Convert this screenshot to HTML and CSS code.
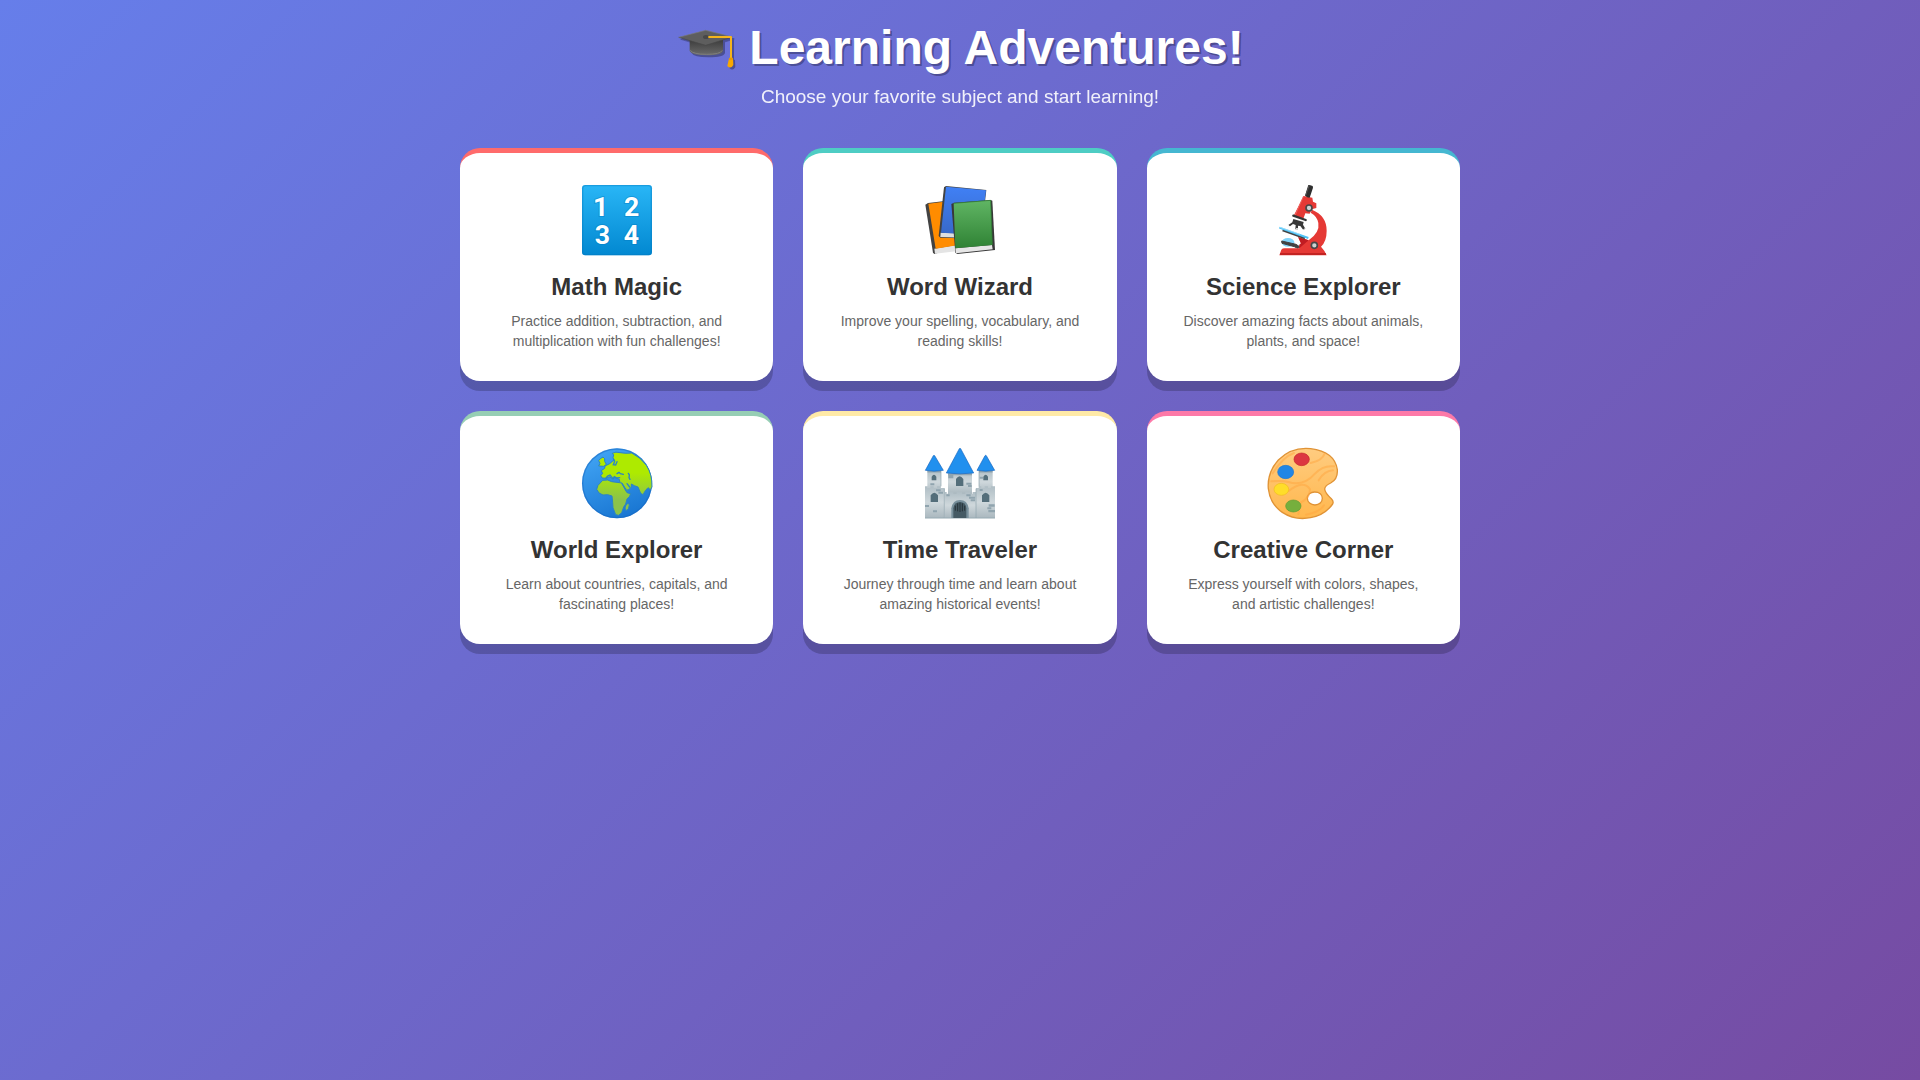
FILE: index.html
```
<!DOCTYPE html>
<html lang="en">
<head>
  <meta charset="UTF-8">
  <meta name="viewport" content="width=device-width, initial-scale=1.0">
  <title>Learning Adventures</title>
  <link rel="stylesheet" href="styles.css">
</head>
<body>
  <div class="container">
    <header class="header">
      <h1>
        <svg class="cap" viewBox="6 0 180 150" aria-hidden="true">
          <defs>
            <linearGradient id="capBase" x1="0" y1="0" x2="0" y2="1">
              <stop offset="0" stop-color="#3c3c3c"/>
              <stop offset="1" stop-color="#6b6b6b"/>
            </linearGradient>
          </defs>
          <path d="M47 50v34q6 13 51 13t49-13V50z" fill="url(#capBase)"/>
          <path d="M49 82q8 12 49 12t47-12" fill="none" stroke="#7d7d7d" stroke-width="3"/>
          <path d="M14 43L95 22l80 20-80 25z" fill="#5e5e5e"/>
          <path d="M14 43l81 24 80-25" fill="none" stroke="#484848" stroke-width="2"/>
          <path d="M14 43L95 22l80 20" fill="none" stroke="#787878" stroke-width="2"/>
          <ellipse cx="96" cy="42" rx="9" ry="6" fill="#484848"/>
          <path d="M103 42h68v66" fill="none" stroke="#f5b51b" stroke-width="6" stroke-linejoin="round"/>
          <path d="M165 106q6-6 12 0l1 20q-8 14-18 3z" fill="#f9a800"/>
          <path d="M165 108h12" stroke="#c98400" stroke-width="2"/>
        </svg>
        <span>Learning Adventures!</span>
      </h1>
      <p>Choose your favorite subject and start learning!</p>
    </header>

    <main class="subjects">
      <a href="#math" class="card math">
        <svg class="icon" viewBox="15 9 216 225" aria-hidden="true">
          <defs>
            <linearGradient id="tile" x1="0" y1="0" x2="0" y2="1">
              <stop offset="0" stop-color="#29b6f6"/>
              <stop offset="1" stop-color="#0288d1"/>
            </linearGradient>
          </defs>
          <rect x="18" y="15" width="210" height="211" rx="10" fill="url(#tile)"/>
          <rect x="20" y="17" width="206" height="207" rx="9" fill="none" stroke="#0277bd" stroke-opacity="0.4" stroke-width="4"/>
          <g class="digits">
            <text x="74" y="108">1</text>
            <text x="167" y="108">2</text>
            <text x="79" y="191">3</text>
            <text x="166" y="191">4</text>
          </g>
        </svg>
        <h3>Math Magic</h3>
        <p>Practice addition, subtraction, and multiplication with fun challenges!</p>
      </a>
      <a href="#words" class="card words">
        <svg class="icon" viewBox="15 9 216 225" aria-hidden="true">
          <defs>
            <linearGradient id="bookBlue" x1="0" y1="0" x2="0" y2="1">
              <stop offset="0" stop-color="#4080f5"/>
              <stop offset="1" stop-color="#3868c8"/>
            </linearGradient>
            <linearGradient id="bookGreen" x1="0" y1="0" x2="0" y2="1">
              <stop offset="0" stop-color="#60b564"/>
              <stop offset="1" stop-color="#2f8234"/>
            </linearGradient>
          </defs>
          <path d="M19 74l8-5 70-8 18 140-69 21-4-4z" fill="#424242"/>
          <path d="M46 206l66-11v19l-64 7z" fill="#e4e4e4"/>
          <path d="M28 71l70-9 16 134-64 10z" fill="#ff8c00"/>
          <path d="M75 22l6-4 121 12-17 146-121-3-5-5z" fill="#424242"/>
          <path d="M65 158l119 4v13l-120-4z" fill="#dedede"/>
          <path d="M81 20l120 11-16 134-119-7z" fill="url(#bookBlue)"/>
          <path d="M97 72l8-4 110-8 5 2 8 148-113 12-6-4z" fill="#383838"/>
          <path d="M109 205l110-10 2 13-110 12z" fill="#e6e6e6"/>
          <path d="M104 70l111-9 5 134-111 10z" fill="url(#bookGreen)"/>
          <path d="M105 70l110-9 5 133" fill="none" stroke="#2e7d32" stroke-width="2"/>
        </svg>
        <h3>Word Wizard</h3>
        <p>Improve your spelling, vocabulary, and reading skills!</p>
      </a>
      <a href="#science" class="card science">
        <svg class="icon" viewBox="15 9 216 225" aria-hidden="true">
          <ellipse cx="78" cy="187" rx="19" ry="13" fill="#81d4fa"/>
          <path d="M59 183l43 10 12 8-7 4-10-5-37-10z" fill="#424242" stroke="#424242" stroke-width="3" stroke-linejoin="round"/>
          <path d="M52 226l6-17q3-4 10-4h44l6-12-10-22 32 10q34-24 29-52-3-20-23-31l4-9q44 18 44 63 0 32-17 48 10 10 17 26z" fill="#e53935"/>
          <path d="M54 222h138" stroke="#b71c1c" stroke-width="4"/>
          <path d="M112 205q-3-12 5-15l-8-18 31 9z" fill="#c01c22"/>
          <path d="M125 48l26 5 2 12 10 5v14l-14 4-6 13-13-1-6 16-29-9z" fill="#e53935"/>
          <path d="M125 48l-26 58" stroke="#f06460" stroke-width="3"/>
          <path d="M139 15q3-1 13 3l1 5-10 30q-8 0-14-6z" fill="#2e2e2e"/>
          <path d="M141 18l-10 28" stroke="#555" stroke-width="3"/>
          <path d="M94 107l37 13" stroke="#353535" stroke-width="7" stroke-linecap="round"/>
          <path d="M94 117l31 9-2 8 7 12-6 4-9-12-7-1v11h-8l1-13-8-3-9 7-5-4 12-8z" fill="#383838"/>
          <path d="M77 135l5 4M102 146h7M124 149l5-3" stroke="#eee" stroke-width="3"/>
          <path d="M62 150l67 24" stroke="#424242" stroke-width="8"/>
          <path d="M52 143l87 31" stroke="#4fc3f7" stroke-width="6"/>
          <path d="M54 142l60 21" stroke="#b3e5fc" stroke-width="2"/>
          <g fill="#cfd2d3" stroke="#484848" stroke-width="5">
            <circle cx="141" cy="84" r="9"/>
            <circle cx="157" cy="196" r="9"/>
          </g>
        </svg>
        <h3>Science Explorer</h3>
        <p>Discover amazing facts about animals, plants, and space!</p>
      </a>
      <a href="#world" class="card world">
        <svg class="icon" viewBox="15 9 216 225" aria-hidden="true">
          <defs>
            <linearGradient id="sea" x1="0.2" y1="0" x2="0.6" y2="1">
              <stop offset="0" stop-color="#42a5f5"/>
              <stop offset="1" stop-color="#1976d2"/>
            </linearGradient>
            <linearGradient id="land" gradientUnits="userSpaceOnUse" x1="0" y1="70" x2="0" y2="170">
              <stop offset="0.2" stop-color="#aeea00"/>
              <stop offset="1" stop-color="#8bc34a"/>
            </linearGradient>
          </defs>
          <circle cx="123" cy="121" r="105" fill="url(#sea)"/>
          <circle cx="123" cy="121" r="103" fill="none" stroke="#1565c0" stroke-opacity="0.5" stroke-width="4"/>
          <g fill="url(#land)" stroke="#2b83c5" stroke-width="3" stroke-linejoin="round">
            <path d="M109 31q10-6 23-2 18 3 35 1 27 13 44 37 18 27 17 65l-5 8-7-6-8 9-7 12-7-4-8-19-11-4-9-5 0 9q-7 11-17 10l-10-15-7-8-2-10-13-5-8 3-9-6-8 5-14-1-4-8 6-5-4-9 10-7 1-7 14-7 13-11-3-7 2-8z"/>
            <path d="M73 47l8-5 5 5v8l5 9-8 6-15-1 4-8-4-8z"/>
            <path d="M66 127l14-15 15-1 12 5 7 1 9 1 15 2 10 21 5 8 11 3q-1 8-11 16l-4 15-6 9-6 17-9 8-9-2-8-21-1-15-2-20-13-4-14 1-12-6-7-11z"/>
            <path d="M150 186l7-6 3 6-3 12-7 5-3-8z"/>
          </g>
          <g fill="none" stroke="#2b83c5" stroke-width="4" stroke-linecap="round">
            <path d="M90 105l5-6 7-3 9 11 4-6 8 4 8-1"/>
            <path d="M123 92l6-4 4 4 9 2M157 91l3 5-1 8 3 5"/>
            <path d="M113 49l3 6-4 10 7 1 4-10"/>
            <path d="M138 122l8 12 4 5M153 122l8 10"/>
          </g>
        </svg>
        <h3>World Explorer</h3>
        <p>Learn about countries, capitals, and fascinating places!</p>
      </a>
      <a href="#history" class="card history">
        <svg class="icon" viewBox="15 9 216 225" aria-hidden="true">
          <defs>
            <linearGradient id="stone" x1="0" y1="0" x2="0" y2="1">
              <stop offset="0" stop-color="#b0bec5"/>
              <stop offset="0.5" stop-color="#cfd8dc"/>
              <stop offset="1" stop-color="#a9b7be"/>
            </linearGradient>
          </defs>
          <g fill="url(#stone)">
            <path d="M25 80h41v55H25zM180 80h41v55h-41zM87 88h72v65H87z"/>
            <path d="M77 147h6v5h8v-5h12v5h10v-5h16v5h10v-5h14v5h8v-5h10v79H77z"/>
            <path d="M18 130h8v5h8v-5h10v5h10v-5h9v5h14v91H18zM171 135h8v-5h8v5h10v-5h10v5h9v-5h12v96h-57z"/>
          </g>
          <path d="M18 225h210M76 137v88M171 137v88M66 84v46M180 84v46" stroke="#90a4ae" stroke-width="2"/>
          <path d="M25 86h41M180 86h41M87 94h72" stroke="#78909c" stroke-opacity="0.6" stroke-width="5"/>
          <g fill="#90a4ae">
            <path d="M51 139h14v6H51zM58 146h14v6H58zM18 186h12v6H18zM42 202h12v6H42zM88 95h15v11H88zM142 119h15v6h-15zM147 126h11v6h-11zM142 154h13v6h-13zM150 161h18v6h-18zM155 169h13v6h-13zM82 154h10v6H82zM182 101h10v6h-10zM209 184h18v7h-18zM205 193h12v6h-12zM182 138h9v6h-9zM208 201h20v7h-20zM34 121h12v6H34z"/>
          </g>
          <g fill="#546e7a">
            <path d="M38 112v-11q7-12 14 0v11zM193 112v-11q7-12 14 0v11zM111 129v-21q11-16 22 0v21z"/>
            <path d="M35 177v-20q11-15 22 0v20zM189 177v-20q11-15 22 0v20z"/>
          </g>
          <path d="M97 225v-29q4-25 26-25t26 25v29z" fill="#78909c"/>
          <path d="M103 225v-29q3-19 20-19t19 19v29z" fill="#455a64"/>
          <path d="M109 188v15M116 181v24M123 179v28M130 181v24M137 188v15" stroke="#263238" stroke-width="3"/>
          <g fill="#2190ee" stroke="#1565c0" stroke-width="2" stroke-linejoin="round">
            <path d="M43 38q2-2 4 0l26 44q-28 5-54 0zM198 38q2-2 4 0l25 44q-27 5-53 0zM121 17q2-3 4 0l39 73q-41 5-82 0z"/>
          </g>
        </svg>
        <h3>Time Traveler</h3>
        <p>Journey through time and learn about amazing historical events!</p>
      </a>
      <a href="#art" class="card art">
        <svg class="icon" viewBox="15 9 216 225" aria-hidden="true">
          <defs>
            <linearGradient id="wood" x1="0" y1="0" x2="0" y2="1">
              <stop offset="0" stop-color="#ffcc80"/>
              <stop offset="1" stop-color="#ffb74d"/>
            </linearGradient>
          </defs>
          <path d="M146 17q-57-6-97 34-34 38-30 86 5 46 42 71 38 25 85 16 43-8 66-41 4-8-4-16-19-17-20-29 1-10 18-18 22-12 20-40-8-54-80-63zM158 147c14 0 23 8 23 19s-9 20-22 20-23-9-23-20 9-19 22-19z" fill="url(#wood)" fill-rule="evenodd" stroke="#e09336" stroke-width="4"/>
          <g fill="none" stroke="#ffa63f" stroke-opacity="0.5" stroke-width="6" stroke-linecap="round">
            <path d="M28 115q36-2 51 2 46 14 80-25 24-26 57-22"/>
            <path d="M80 144q45-35 64-5 0 26-27 39l-8 35"/>
            <path d="M132 215q42-8 54-28M146 60q35-7 42-28M32 91q32-50 64-61"/>
            <path d="M170 112q16-28 43-30"/>
          </g>
          <g stroke-width="2">
            <ellipse cx="119" cy="49" rx="23" ry="19" fill="#dc3741" stroke="#c62828"/>
            <ellipse cx="71" cy="87" rx="24" ry="20" fill="#2186e5" stroke="#1976d2"/>
            <ellipse cx="58" cy="139" rx="22" ry="18" fill="#ffdd2a" stroke="#f0bd20"/>
            <ellipse cx="94" cy="189" rx="23" ry="18" fill="#76af3d" stroke="#5f9c33"/>
          </g>
        </svg>
        <h3>Creative Corner</h3>
        <p>Express yourself with colors, shapes, and artistic challenges!</p>
      </a>
    </main>
  </div>
</body>
</html>
```
FILE: styles.css
```
* {
  margin: 0;
  padding: 0;
  box-sizing: border-box;
}
body {
  min-height: 100vh;
  padding: 20px;
  background: linear-gradient(135deg, #667eea 0%, #764ba2 100%);
  font-family: "Liberation Sans", Arial, sans-serif;
}
.container {
  max-width: 1000px;
  margin: 0 auto;
}
.header {
  margin-bottom: 40px;
  text-align: center;
  color: #fff;
}
.header h1 {
  display: flex;
  justify-content: center;
  align-items: center;
  gap: 13px;
  margin-bottom: 10px;
  font-size: 48px;
  line-height: 56px;
  text-shadow: 2px 2px 0 rgba(0, 0, 0, 0.3);
}
.cap {
  width: 60px;
  height: 50px;
  filter: drop-shadow(2px 2px 0 rgba(0, 0, 0, 0.3));
}
.header p {
  font-size: 19px;
  opacity: 0.9;
}
.subjects {
  display: grid;
  grid-template-columns: repeat(auto-fit, minmax(280px, 1fr));
  gap: 30px;
}
.card {
  padding: 30px;
  background: #fff;
  border-top: 5px solid #ff6b6b;
  border-radius: 20px;
  box-shadow: 0 10px 0 rgba(0, 0, 0, 0.2);
  text-align: center;
  text-decoration: none;
}
.icon {
  display: block;
  width: 72px;
  height: 75px;
  margin: 0 auto 15px;
}
.digits {
  fill: #fff;
  stroke: #0277bd;
  stroke-opacity: 0.4;
  stroke-width: 6px;
  paint-order: stroke;
  font-family: Roboto, sans-serif;
  font-size: 80px;
  font-weight: 700;
  text-anchor: middle;
}
.card h3 {
  margin-bottom: 10px;
  font-size: 24px;
  color: #333;
}
.card p {
  font-size: 14px;
  line-height: 20px;
  color: #666;
}
.words {
  border-top-color: #4ecdc4;
}
.science {
  border-top-color: #45b7d1;
}
.world {
  border-top-color: #96ceb4;
}
.history {
  border-top-color: #ffeaa7;
}
.art {
  border-top-color: #fd79a8;
}
```
